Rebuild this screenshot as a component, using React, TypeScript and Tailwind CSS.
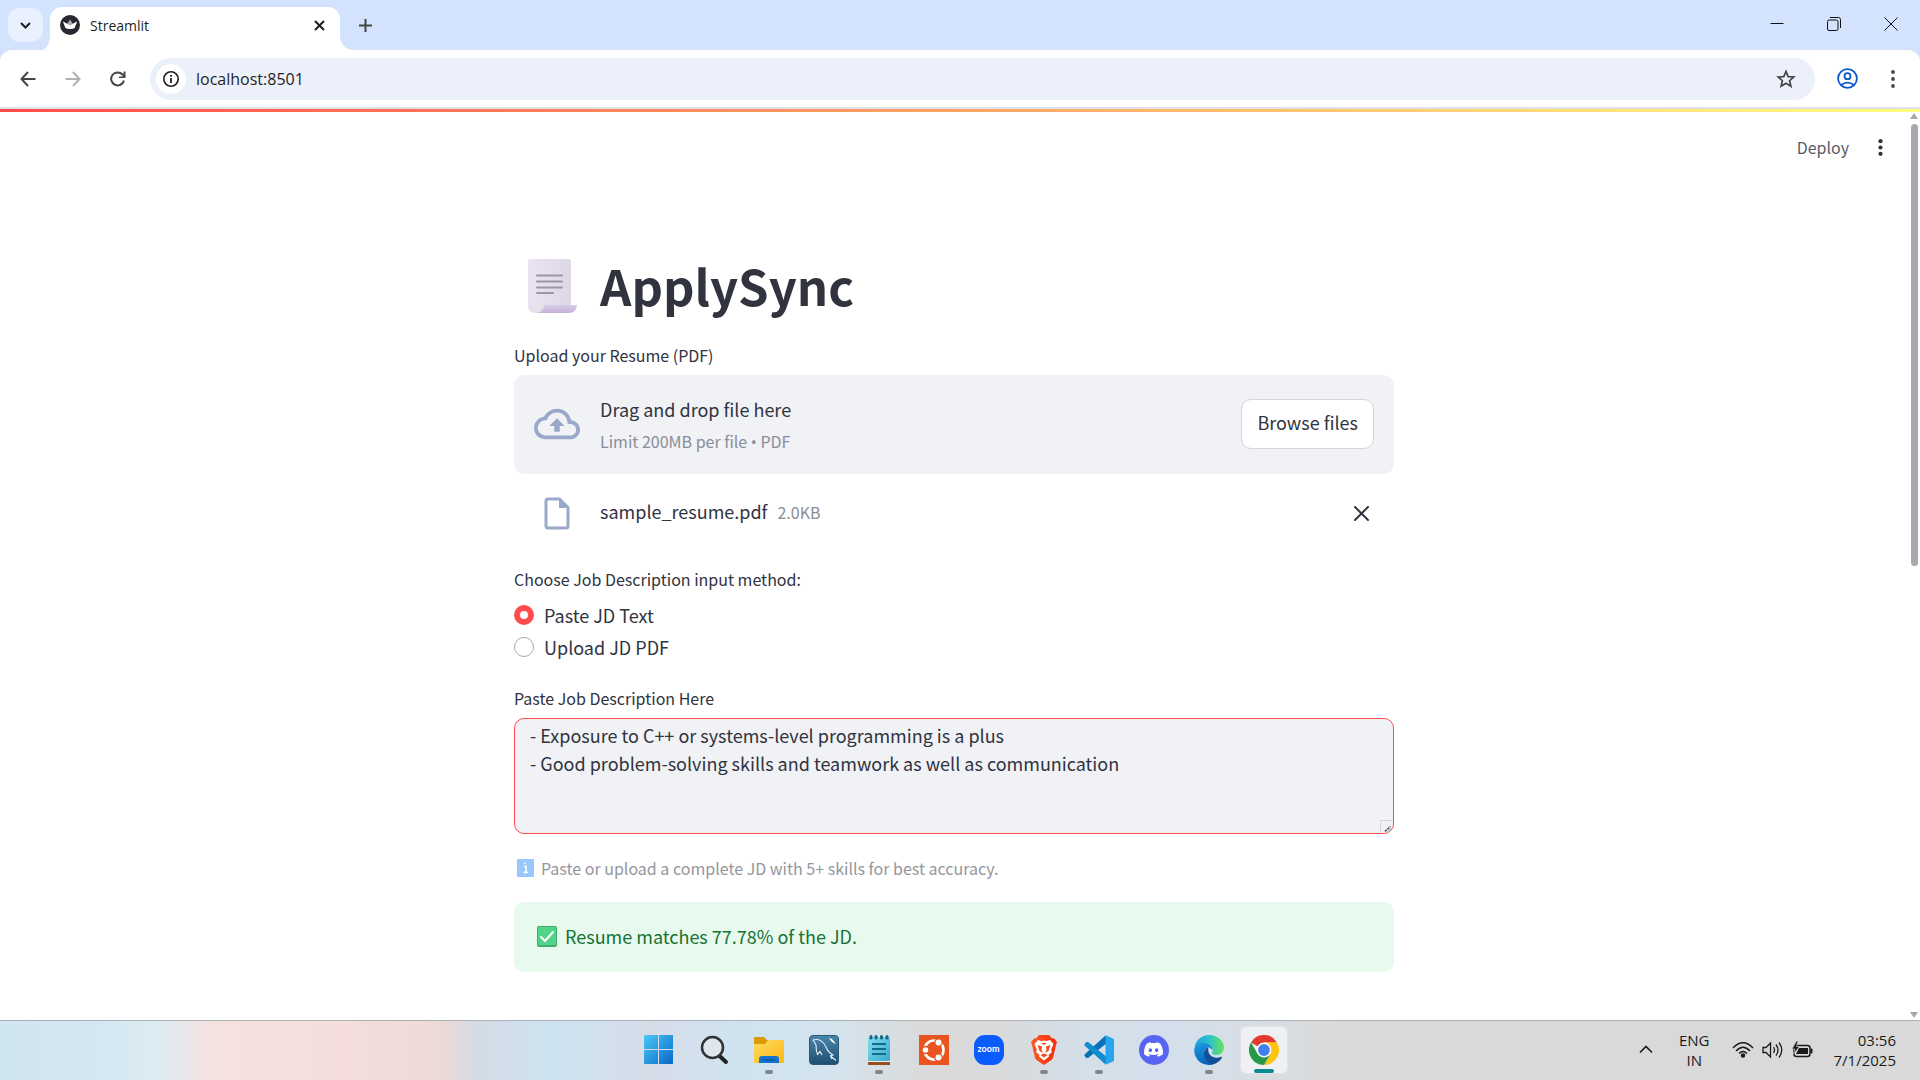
import React from "react";
import { SiDiscord } from "react-icons/si";

function WindowControls() {
  return (
    <div className="ml-auto flex h-full pb-[2px] pr-px text-[#111]">
      <button aria-label="Minimize" className="flex w-[57px] items-center justify-center">
        <svg width="14" height="14" viewBox="0 0 14 14"><path d="M0.5 6.5H13.5" stroke="currentColor" /></svg>
      </button>
      <button aria-label="Restore" className="flex w-[57px] items-center justify-center">
        <svg width="14" height="14" viewBox="0 0 14 14" fill="none" stroke="currentColor">
          <rect x="0.5" y="3" width="10.5" height="10.5" rx="1.5" />
          <path d="M3 0.5H11.5a2 2 0 0 1 2 2V11" />
        </svg>
      </button>
      <button aria-label="Close window" className="flex w-[57px] items-center justify-center">
        <svg width="14" height="14" viewBox="0 0 14 14"><path d="M0.5 0.5L13.5 13.5M13.5 0.5L0.5 13.5" stroke="currentColor" /></svg>
      </button>
    </div>
  );
}

function TabStrip() {
  return (
    <header className="flex h-[50px] shrink-0 items-start bg-[#d3e3fd] pl-2">
      <button aria-label="Search tabs" className="mt-2 flex h-[34px] w-[35px] items-center justify-center rounded-xl bg-[#e9f0fe]">
        <svg width="11" height="7" viewBox="0 0 11 7"><path d="M1 1L5.5 5.5L10 1" fill="none" stroke="#1f1f1f" strokeWidth="2" /></svg>
      </button>
      <svg className="mt-[35px]" width="7" height="15" viewBox="0 0 7 15"><path d="M7 0C7 8 4 13 0 15H7Z" fill="#fff" /></svg>
      <div className="mt-[7px] flex h-[43px] w-[290px] items-center rounded-t-xl bg-white pb-[7px] pl-[10px] pr-[11px]">
        <svg width="20" height="20" viewBox="0 0 20 20">
          <circle cx="10" cy="10" r="10" fill="#262730" />
          <path d="M3 6.500L7 9L10 4.500L13 9L17 6.500L14.500 13Q10 15 5.500 13Z" fill="#a9a9ad" />
          <path d="M3 6.500L10 10.500L17 6.500L14.500 13Q10 15 5.500 13Z" fill="#fff" />
        </svg>
        <span className="ml-[10px] font-['Open_Sans','Noto_Sans',sans-serif] text-[14px] text-[#1f1f1f]">Streamlit</span>
        <button aria-label="Close tab" className="ml-auto p-1">
          <svg width="11" height="11" viewBox="0 0 11 11"><path d="M1 1L10 10M10 1L1 10" stroke="#1f1f1f" strokeWidth="2" /></svg>
        </button>
      </div>
      <svg className="mt-[35px]" width="15" height="15" viewBox="0 0 15 15"><path d="M0 0C0 9 5 15 15 15H0Z" fill="#fff" /></svg>
      <button aria-label="New tab" className="mt-[15px] flex h-5 w-5 items-center justify-center">
        <svg width="13" height="13" viewBox="0 0 13 13"><path d="M6.5 0V13M0 6.5H13" stroke="#444746" strokeWidth="2" /></svg>
      </button>
      <WindowControls />
    </header>
  );
}

function Toolbar() {
  return (
    <div className="shrink-0 bg-[#d3e3fd]">
      <div className="flex h-[57px] items-center rounded-t-xl bg-white pl-[17px]">
        <button aria-label="Back" className="flex w-[22px] justify-center">
          <svg width="16" height="16" viewBox="0 0 16 16" fill="none" stroke="#444746" strokeWidth="2"><path d="M15.5 8H2M8 1L1.5 8L8 15" /></svg>
        </button>
        <button aria-label="Forward" className="ml-[23px] flex w-[22px] justify-center">
          <svg width="16" height="16" viewBox="0 0 16 16" fill="none" stroke="#b0b1b0" strokeWidth="2"><path d="M0.5 8H14M8 1L14.5 8L8 15" /></svg>
        </button>
        <button aria-label="Reload" className="ml-[23px] flex w-[22px] justify-center">
          <svg width="16" height="16" viewBox="0 0 16 16"><path d="M14 9.5A6.5 6.5 0 1 1 12.5 3.5L14.5 5.5" fill="none" stroke="#444746" strokeWidth="2" /><path d="M15.5 0.5V7H9V5.5H13.5V0.5Z" fill="#444746" /></svg>
        </button>
        <div className="ml-[21px] flex h-[42px] flex-1 items-center rounded-full bg-[#ebf0fa] pl-[6px] pr-[19px]">
          <button aria-label="Site information" className="flex h-[30px] w-[30px] items-center justify-center rounded-full bg-white">
            <svg width="16" height="16" viewBox="0 0 16 16" fill="none" stroke="#1f1f1f"><circle cx="8" cy="8" r="7.2" strokeWidth="1.6" /><path d="M8 7V12M8 4V5.8" strokeWidth="1.8" /></svg>
          </button>
          <input aria-label="Address" defaultValue="localhost:8501" className="ml-[10px] min-w-0 flex-1 bg-transparent pt-px font-['Open_Sans','Noto_Sans',sans-serif] text-[16px] text-[#1f1f1f] outline-none" />
          <button aria-label="Bookmark this tab">
            <svg width="20" height="20" viewBox="0 0 20 20"><path d="M10 2.4L12.2 7.6L17.8 8L13.6 11.7L14.9 17.2L10 14.2L5.1 17.2L6.4 11.7L2.2 8L7.8 7.6Z" fill="none" stroke="#444746" strokeWidth="1.7" /></svg>
          </button>
        </div>
        <button aria-label="Profile" className="ml-[22px]">
          <svg width="21" height="21" viewBox="0 0 21 21" fill="none" stroke="#0b57d0" strokeWidth="1.8"><circle cx="10.5" cy="10.5" r="9.4" /><circle cx="10.5" cy="8.2" r="3" /><path d="M4.2 17Q10.5 12.2 16.8 17" /></svg>
        </button>
        <button aria-label="Browser menu" className="ml-[24px] mr-[17px] flex w-[21px] justify-center">
          <svg width="4" height="18" viewBox="0 0 4 18" fill="#444746"><circle cx="2" cy="2" r="1.9" /><circle cx="2" cy="9" r="1.9" /><circle cx="2" cy="16" r="1.9" /></svg>
        </button>
      </div>
    </div>
  );
}

function ScrollIcon() {
  return (
    <svg width="50" height="55" viewBox="0 0 50 55">
      <defs>
        <linearGradient id="paper" x1="0" x2="1"><stop offset="0" stopColor="#eae3f2" /><stop offset="1" stopColor="#ded8e6" /></linearGradient>
        <linearGradient id="roll" x1="0" y1="0" x2="0" y2="1"><stop offset="0" stopColor="#d8cce6" /><stop offset="1" stopColor="#c6b0dc" /></linearGradient>
      </defs>
      <path d="M2 0H41Q43 0 43 2V47L10 54H8Q0 54 0 46V2Q0 0 2 0Z" fill="url(#paper)" />
      <path d="M0 46Q0 54 8 54Q15 53 17 46Z" fill="#e6e2ea" />
      <path d="M17 46H49Q48 54 41 54H8Q15 53 17 46Z" fill="url(#roll)" />
      <path d="M9 16.5H34M9 22.5H34M9 28.5H34M9 34H25" stroke="#9d94a6" strokeWidth="2" strokeLinecap="round" />
    </svg>
  );
}

function Uploader() {
  return (
    <section>
      <label htmlFor="resume" className="block text-[16px] leading-6">Upload your Resume (PDF)</label>
      <div className="mt-2 flex h-[99px] items-center rounded-[10px] bg-[#f0f2f6] px-5 pb-[2px]">
        <svg width="46" height="46" viewBox="0 0 24 24" fill="#9aa9c9"><path d="M19.35 10.04A7.49 7.49 0 0 0 12 4C9.11 4 6.6 5.64 5.35 8.04A5.994 5.994 0 0 0 0 14c0 3.31 2.69 6 6 6h13c2.76 0 5-2.24 5-5 0-2.64-2.05-4.78-4.65-4.96zM19 18H6c-2.21 0-4-1.79-4-4s1.79-4 4-4h.71C7.37 7.69 9.48 6 12 6c3.04 0 5.5 2.46 5.5 5.5v.5H19c1.66 0 3 1.34 3 3s-1.34 3-3 3zM8 13h2.55v3h2.9v-3H16l-4-4z" /></svg>
        <div className="ml-5 flex flex-col pt-1">
          <span className="text-[18px] leading-8">Drag and drop file here</span>
          <span className="text-[16px] leading-8 text-[#8b8d97]">
            Limit 200MB per file <span className="font-['Open_Sans',sans-serif]">•</span> PDF
          </span>
        </div>
        <input id="resume" type="file" accept="application/pdf" className="hidden" />
        <button className="ml-auto h-[50px] rounded-[10px] border border-[#d6d6d9] bg-white px-[15px] pb-[2px] text-[18px]">Browse files</button>
      </div>
      <div className="flex h-20 items-center pb-[2px] pl-5 pr-[25px]">
        <svg width="46" height="38" viewBox="0 0 46 38"><path d="M14 5H25.5L34 13.5V32Q34 34 32 34H14Q12 34 12 32V7Q12 5 14 5Z" fill="none" stroke="#9aa9c9" strokeWidth="3" /><path d="M25 5V14H34Z" fill="#9aa9c9" /></svg>
        <span className="ml-5 pb-[3px] text-[18px]">sample_resume.pdf</span>
        <span className="ml-[10px] pb-[3px] text-[16px] text-[#8b8d97]">2.0KB</span>
        <button aria-label="Remove file" className="ml-auto">
          <svg width="15" height="15" viewBox="0 0 15 15"><path d="M1 1L14 14M14 1L1 14" stroke="#31333f" strokeWidth="2" strokeLinecap="round" /></svg>
        </button>
      </div>
    </section>
  );
}

const radioClass =
  "h-5 w-5 appearance-none rounded-full border border-[#a9aab0] bg-white checked:border-[6px] checked:border-[#ff4b4b]";

function JobDescription() {
  return (
    <>
      <fieldset className="mt-[13px]">
        <legend className="text-[16px] leading-6">Choose Job Description input method:</legend>
        <div className="mt-2 flex flex-col">
          <label className="flex h-8 items-center gap-[10px] text-[18px]">
            <input type="radio" name="method" defaultChecked className={radioClass} />
            Paste JD Text
          </label>
          <label className="flex h-8 items-center gap-[10px] text-[18px]">
            <input type="radio" name="method" className={radioClass} />
            Upload JD PDF
          </label>
        </div>
      </fieldset>
      <div className="mt-[23px]">
        <label htmlFor="jd" className="block text-[16px] leading-6">Paste Job Description Here</label>
        <div className="relative mt-2">
          <textarea
            id="jd"
            defaultValue={"- Exposure to C++ or systems-level programming is a plus\n- Good problem-solving skills and teamwork as well as communication"}
            className="block h-[116px] w-full resize-none rounded-[10px] border border-[#ff4b4b] bg-[#f0f2f6] px-[15px] py-[2px] text-[18px] leading-7 outline-none"
          />
          <svg className="pointer-events-none absolute bottom-px right-px" width="13" height="13" viewBox="0 0 13 13">
            <path d="M0.5 13V0.500H13" fill="none" stroke="#d5d6d9" />
            <path d="M5 11.500L10.500 6.500" stroke="#44464c" strokeWidth="1.500" strokeDasharray="2.500 0.800" />
            <path d="M8 12L11 9.200" stroke="#b5b6ba" strokeWidth="2" />
          </svg>
        </div>
      </div>
      <p className="mt-[22px] flex items-center text-[16px] leading-6 text-[#95969d]">
        <svg className="ml-[3px] mr-[7px]" width="17" height="18" viewBox="0 0 17 18"><rect width="17" height="18" rx="1" fill="#99c7fb" /><path d="M7 7.500H9V13M6.500 13.500H11M8 3.500V5" stroke="#fff" strokeWidth="1.500" fill="none" /></svg>
        Paste or upload a complete JD with 5+ skills for best accuracy.
      </p>
      <div className="mt-[22px] flex h-[70px] items-center rounded-[10px] bg-[#e8f9ee] px-[23px] pb-[2px] text-[18px] text-[#177233]">
        <svg className="mr-2" width="20" height="21" viewBox="0 0 20 21"><rect width="20" height="21" rx="2" fill="#3fae6d" /><rect x="1" y="1" width="18" height="18" rx="1" fill="#52d38a" /><path d="M4 11L8 15L16 6" stroke="#fff" strokeWidth="2" fill="none" strokeLinecap="round" /></svg>
        Resume matches 77.78% of the JD.
      </div>
    </>
  );
}

function Page() {
  return (
    <main className="flex min-h-0 flex-1 bg-white font-['Noto_Sans_CJK_SC',sans-serif] text-[#31333f]">
      <div className="min-w-0 flex-1 overflow-hidden">
        <div className="flex h-[70px] items-center justify-end gap-[29px] pr-[25px]">
          <button className="text-[16px] text-[#5a5c66]">Deploy</button>
          <button aria-label="App menu">
            <svg width="5" height="17" viewBox="0 0 5 17" fill="#31333f"><circle cx="2.500" cy="2.200" r="2.100" /><circle cx="2.500" cy="8.500" r="2.100" /><circle cx="2.500" cy="14.800" r="2.100" /></svg>
          </button>
        </div>
        <div className="mx-auto max-w-[880px] pt-[68px]">
          <div className="flex h-[72px] items-center gap-[22px] pl-[14px]">
            <ScrollIcon />
            <h1 className="pb-[3px] text-[49px] font-bold leading-none">ApplySync</h1>
          </div>
          <div className="mt-[21px]"><Uploader /></div>
          <JobDescription />
        </div>
      </div>
      <div className="flex w-3 flex-col items-center gap-[5px] pb-[2px] pt-px">
        <svg width="8" height="6" viewBox="0 0 8 6"><path d="M4 0L8 6H0Z" fill="#a8a8ae" /></svg>
        <div className="h-[442px] w-[7px] rounded-full bg-[#a8a8ae]" />
        <svg className="mt-auto" width="8" height="6" viewBox="0 0 8 6"><path d="M0 0H8L4 6Z" fill="#a8a8ae" /></svg>
      </div>
    </main>
  );
}

const icons: { name: string; running?: boolean; active?: boolean; art: React.ReactNode }[] = [
  {
    name: "Start",
    art: (
      <svg width="30" height="30" viewBox="0 0 30 30">
        <defs><linearGradient id="win" x1="0" y1="0" x2="1" y2="1"><stop offset="0" stopColor="#4cc9f7" /><stop offset="1" stopColor="#0768c9" /></linearGradient></defs>
        <path d="M1 0H14V14H0V1ZM15 0H29V14H15ZM0 15H14V29H0ZM15 15H29V29H15Z" fill="url(#win)" />
      </svg>
    ),
  },
  {
    name: "Search",
    art: (
      <svg width="30" height="30" viewBox="0 0 30 30"><path d="M19.500 20L27 27" stroke="#222" strokeWidth="4" strokeLinecap="round" /><circle cx="13.500" cy="12.500" r="10.500" fill="#dfe7ec" stroke="#333" strokeWidth="2.500" /></svg>
    ),
  },
  {
    name: "File Explorer",
    running: true,
    art: (
      <svg width="30" height="30" viewBox="0 0 30 30">
        <defs><linearGradient id="fold" x1="0" y1="0" x2="1" y2="1"><stop offset="0" stopColor="#ffda5e" /><stop offset="1" stopColor="#f9b813" /></linearGradient></defs>
        <path d="M0 3Q0 2 1 2H10L13 5H29V10H0Z" fill="#dc9a08" />
        <path d="M0 9H11L14 5H29Q30 5 30 6V27Q30 28 29 28H1Q0 28 0 27Z" fill="url(#fold)" />
        <path d="M5 28V24Q5 21 8 21H22Q25 21 25 24V28Z" fill="#1173cf" />
        <path d="M9 25H21" stroke="#0b4f9c" strokeWidth="1.500" />
      </svg>
    ),
  },
  {
    name: "MySQL Workbench",
    art: (
      <svg width="30" height="30" viewBox="0 0 30 30">
        <defs><linearGradient id="sql" x1="0" y1="0" x2="0" y2="1"><stop offset="0" stopColor="#4b86ac" /><stop offset="1" stopColor="#1e4f70" /></linearGradient></defs>
        <rect x="0.500" y="0.500" width="29" height="29" rx="3.500" fill="url(#sql)" stroke="#2b5a78" />
        <path d="M4 5C10 3 15 7 17 12C18.500 16 20 18 24 20L21.500 21L27 25.500M4 5L7 10C7 14 7.500 17 8.500 19.500L11 16.500L13 20M21.500 21L23 24" fill="none" stroke="#e8f1f6" strokeWidth="1.100" />
        <path d="M20 3L23 4L27 9L24.500 8L22 6Z" fill="#fff" />
      </svg>
    ),
  },
  {
    name: "Notepad",
    running: true,
    art: (
      <svg width="24" height="30" viewBox="0 0 24 30">
        <defs><linearGradient id="note" x1="0" y1="0" x2="1" y2="1"><stop offset="0" stopColor="#83def0" /><stop offset="1" stopColor="#35a9cb" /></linearGradient></defs>
        <path d="M1 27H23V30H1Z" fill="#96501b" /><path d="M1 24H23V27H1Z" fill="#eef1f2" />
        <rect x="1" y="2" width="22" height="24" rx="1.500" fill="url(#note)" />
        <path d="M4 1.500V3M9 1.500V3M14.500 1.500V3M20 1.500V3" stroke="#14647e" strokeWidth="3" strokeLinecap="round" />
        <path d="M5 9H19M5 14H19M5 19H19" stroke="#126b88" strokeWidth="2" />
      </svg>
    ),
  },
  {
    name: "Ubuntu",
    art: (
      <svg width="30" height="30" viewBox="0 0 30 30">
        <rect width="30" height="30" fill="#e95420" />
        <circle cx="15" cy="15" r="9.500" fill="none" stroke="#fff" strokeWidth="2.600" />
        <g fill="#fff" stroke="#e95420" strokeWidth="1.400"><circle cx="6.500" cy="15" r="3.500" /><circle cx="19.500" cy="7.500" r="3.700" /><circle cx="19.500" cy="22.500" r="3.700" /></g>
      </svg>
    ),
  },
  {
    name: "Zoom",
    art: (
      <span className="flex h-[30px] w-[30px] items-center justify-center rounded-[11px] bg-[#0b5cff] pb-[2px] font-['Lato',sans-serif] text-[9px] font-bold leading-none text-white">zoom</span>
    ),
  },
  {
    name: "Brave",
    running: true,
    art: (
      <svg width="26" height="30" viewBox="0 0 26 30">
        <defs><linearGradient id="brv"><stop offset="0" stopColor="#fb5a25" /><stop offset="1" stopColor="#f92a0a" /></linearGradient></defs>
        <path d="M8 0H18L20.500 3L23 3.500L26 7L25 10L22 23Q21 25 19 26L13 30L7 26Q5 25 4 23L1 10L0 7L3 3.500L5.500 3Z" fill="url(#brv)" />
        <path d="M7 5L10.500 6L13 5.500L15.500 6L19 5L22.500 9L20 15L21 17L17.500 20L18 21.500L13 25.500L8 21.500L8.500 20L5 17L6 15L3.500 9Z" fill="#fff" />
        <path d="M6.500 10L11 11.500L10.500 15L12 18L8.500 16ZM19.500 10L15 11.500L15.500 15L14 18L17.500 16ZM9.500 20L13 18.500L16.500 20L13 22.500ZM10 8H16L13 10Z" fill="#f94a1c" />
      </svg>
    ),
  },
  {
    name: "Visual Studio Code",
    running: true,
    art: (
      <svg width="30" height="30" viewBox="0 0 30 30">
        <path d="M0.500 19.500L21.500 0.500L23 8L4 23L2.500 23L0.500 21Z" fill="#0a70b6" />
        <path d="M0.500 10.500L21.500 29.500L23 22L4 7L2.500 7L0.500 9Z" fill="#138bd0" />
        <path d="M21.500 0.200L29 3.500Q30 4 30 5V25Q30 26 29 26.500L21.500 29.800Z" fill="#27a5ef" />
      </svg>
    ),
  },
  {
    name: "Discord",
    art: (
      <span className="flex h-[30px] w-[30px] items-center justify-center rounded-full bg-[#5865f2] text-white"><SiDiscord size={19} /></span>
    ),
  },
  {
    name: "Microsoft Edge",
    running: true,
    art: (
      <svg width="30" height="30" viewBox="0 0 30 30">
        <defs>
          <linearGradient id="edgeTop"><stop offset="0" stopColor="#1f9fdd" /><stop offset="0.500" stopColor="#2cc3cf" /><stop offset="1" stopColor="#66e257" /></linearGradient>
          <linearGradient id="edgeLow" x1="0" y1="0" x2="0.400" y2="1"><stop offset="0" stopColor="#1a9fe3" /><stop offset="1" stopColor="#0a64b8" /></linearGradient>
        </defs>
        <path d="M0.500 13C1.500 5 8 0 15 0C23.500 0 30 6 30 12.500C30 17 26.500 20 22.500 20C19 20 17.500 18.500 18 17.500C19.500 15.500 19 12 14 9.500C8.500 7.500 2.500 9.500 0.500 13Z" fill="url(#edgeTop)" />
        <path d="M0.200 15C0.500 10.500 5 7.500 10 8C15 8.500 18.500 11.500 18.500 15L15 12C11.500 12.500 9.500 16 10.500 20C12 25 15.500 28.500 19 29.400C9 32 0 25 0.200 15Z" fill="url(#edgeLow)" />
        <path d="M14.500 12C11 13.500 9 17 10.500 21.500C12 26 15.500 29 19 29.400C23.500 28 26.500 25.500 28 22.500C28 21.500 27.500 21.500 26.500 22C21 24.500 12.500 21 14.500 12Z" fill="#0f4f95" />
      </svg>
    ),
  },
  {
    name: "Google Chrome",
    active: true,
    art: (
      <svg width="30" height="30" viewBox="0 0 30 30">
        <path d="M15 15L2 7.500A15 15 0 0 1 28 7.500H15Z" fill="#e33b2e" />
        <path d="M28 7.500A15 15 0 0 1 15 30L21.500 18.700L15 7.500Z" fill="#fdc511" />
        <path d="M2 7.500L8.500 18.700L15 22L21.500 18.700L15 30A15 15 0 0 1 2 7.500Z" fill="#279847" />
        <circle cx="15" cy="15" r="7.400" fill="#fff" /><circle cx="15" cy="15" r="5.900" fill="#3f80ee" />
      </svg>
    ),
  },
];

function Taskbar() {
  return (
    <footer className="grid h-[60px] shrink-0 grid-cols-[1fr_auto_1fr] border-t border-[#abb0b5] bg-[linear-gradient(90deg,#cfe5ef_0%,#d6e8f1_6%,#dcecf5_8%,#f4e2e1_11%,#f5dedc_18%,#ecdad7_23%,#d3dce6_25%,#cde4f1_29%,#d8dce9_34%,#cfe4f0_38%,#d4e3ec_44%,#dadada_48%,#d9dadb_52%,#d5dfe8_56%,#d3e0ec_61%,#d9dde2_66%,#d9d9d9_70%,#d9d9d9_100%)] pb-[2px] font-['Open_Sans','Noto_Sans',sans-serif] text-[#1b1b1b]">
      <div />
      <nav aria-label="Pinned apps" className="flex items-center gap-[7px] pl-[2px]">
        {icons.map((i) => (
          <button
            key={i.name}
            aria-label={i.name}
            className={`relative flex h-12 w-12 items-center justify-center rounded-md ${i.active ? "border border-[#e2e3e6] bg-[#eef0f3]" : ""}`}
          >
            {i.art}
            {i.running && <span className="absolute bottom-0 h-1 w-2 rounded-full bg-[#80868b]" />}
            {i.active && <span className="absolute bottom-0 h-1 w-5 rounded-full bg-[#0b8a8f]" />}
          </button>
        ))}
      </nav>
      <div className="flex items-center justify-end pr-6">
        <button aria-label="Show hidden icons">
          <svg width="14" height="9" viewBox="0 0 14 9"><path d="M1 7.500L7 1.500L13 7.500" fill="none" stroke="currentColor" strokeWidth="1.600" /></svg>
        </button>
        <button className="ml-[26px] text-center text-[15px] leading-5">ENG<br />IN</button>
        <svg className="ml-[22px]" width="22" height="16" viewBox="0 0 22 16" fill="none" stroke="currentColor" strokeWidth="1.500" aria-label="Wi-Fi">
          <path d="M1 6Q11 -4.500 21 6M4 9Q11 1.500 18 9M7 11.500Q11 7.500 15 11.500" /><circle cx="11" cy="13.500" r="1.500" fill="currentColor" />
        </svg>
        <svg className="ml-[8px]" width="21" height="18" viewBox="0 0 21 18" fill="none" stroke="currentColor" strokeWidth="1.300" aria-label="Volume">
          <path d="M1 6.500H4L8.500 2V16L4 11.500H1ZM11.500 6Q13.500 9 11.500 12M14 3.500Q18 9 14 14.500M17 1.500Q22.500 9 17 16.500" />
        </svg>
        <svg className="ml-[9px]" width="22" height="18" viewBox="0 0 22 18" aria-label="Battery charging">
          <rect x="2" y="4.500" width="16" height="11" rx="2.500" fill="none" stroke="currentColor" strokeWidth="1.500" />
          <path d="M7 7H16V13H4Z" fill="currentColor" /><rect x="18.500" y="7.500" width="2" height="5" rx="1" fill="currentColor" />
          <path d="M4.500 0L0 8H3L1.500 13L7.500 5.500H4.500L6 0Z" fill="currentColor" stroke="#d9d9d9" strokeWidth="0.600" />
        </svg>
        <time className="ml-[20px] text-right text-[15px] leading-5">03:56<br />7/1/2025</time>
      </div>
    </footer>
  );
}

export default function App() {
  return (
    <div className="flex h-screen flex-col overflow-hidden">
      <TabStrip />
      <Toolbar />
      <div className="h-[2px] shrink-0 bg-[#dfe1e5]" />
      <div className="h-[3px] shrink-0 bg-[linear-gradient(90deg,#ff4b4b,#fffd80)]" />
      <Page />
      <Taskbar />
    </div>
  );
}
